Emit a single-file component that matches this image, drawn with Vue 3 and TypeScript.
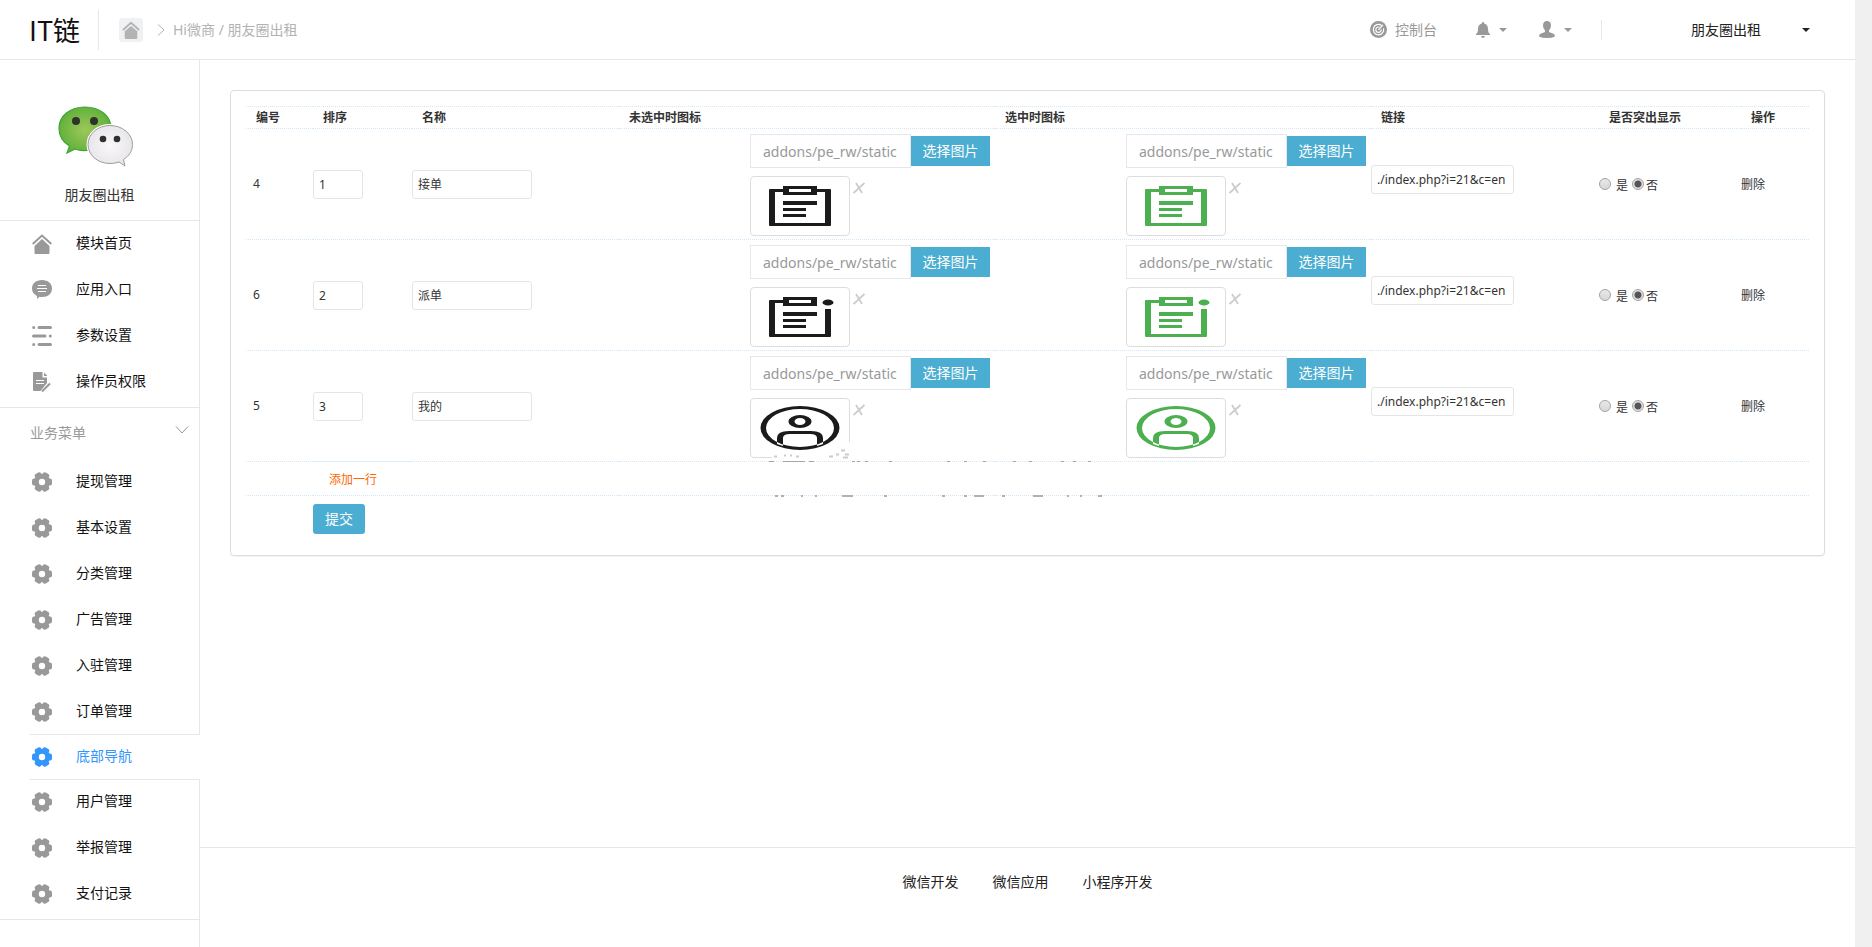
<script setup lang="ts">
import { ref } from 'vue'

interface MenuItem {
  label: string
  icon: 'home' | 'chat' | 'list' | 'doc' | 'gear'
  active?: boolean
}

interface NavRow {
  id: number
  order: string
  name: string
  kind: 'board' | 'task' | 'user'
  image: string
  link: string
  raised: 'yes' | 'no'
}

const topMenu: MenuItem[] = [
  { label: '模块首页', icon: 'home' },
  { label: '应用入口', icon: 'chat' },
  { label: '参数设置', icon: 'list' },
  { label: '操作员权限', icon: 'doc' },
]

const bizMenu: MenuItem[] = [
  { label: '提现管理', icon: 'gear' },
  { label: '基本设置', icon: 'gear' },
  { label: '分类管理', icon: 'gear' },
  { label: '广告管理', icon: 'gear' },
  { label: '入驻管理', icon: 'gear' },
  { label: '订单管理', icon: 'gear' },
  { label: '底部导航', icon: 'gear', active: true },
  { label: '用户管理', icon: 'gear' },
  { label: '举报管理', icon: 'gear' },
  { label: '支付记录', icon: 'gear' },
]

const image = 'addons/pe_rw/static'
const link = './index.php?i=21&c=en'

const rows = ref<NavRow[]>([
  { id: 4, order: '1', name: '接单', kind: 'board', image, link, raised: 'no' },
  { id: 6, order: '2', name: '派单', kind: 'task', image, link, raised: 'no' },
  { id: 5, order: '3', name: '我的', kind: 'user', image, link, raised: 'no' },
])

const lines = 'M33 25h34v4H33z M33 32h23v3H33z M33 38h23v3H33z'
const clip = 'M33 10h34v9H33z M39 13v3h22v-3z'
const shapes: Record<NavRow['kind'], string> = {
  board: `M19 14q0-1 1-1h13v3h-8v31h50V16h-8v-3h13q1 0 1 1v35q0 1-1 1H20q-1 0-1-1z ${clip} ${lines}`,
  task: `M19 14q0-1 1-1h13v3h-8v31h50V22h6v27q0 1-1 1H20q-1 0-1-1z ${clip} ${lines} M72.500 15.500a5.500 3 0 1 0 11 0a5.500 3 0 1 0-11 0z`,
  user:
    'M10.500 30a39.500 22 0 1 0 79 0a39.500 22 0 1 0-79 0z M16 30a34 19 0 1 1 68 0a34 19 0 1 1-68 0z ' +
    'M38.500 23.500a11.500 6.500 0 1 0 23 0a11.500 6.500 0 1 0-23 0z M44.500 23.500a5.500 3.500 0 1 1 11 0a5.500 3.500 0 1 1-11 0z ' +
    'M27 46v-6q0-7 12-7h22q12 0 12 7v6l-6 2v-8q0-4-7-4H40q-7 0-7 4v8z',
}

const variants = [
  { key: 'off', color: '#1b1b1b', title: '未选中时图标' },
  { key: 'on', color: '#4caf50', title: '选中时图标' },
]

const footer = ['微信开发', '微信应用', '小程序开发']

const gearTeeth = [30, 90, 150, 210, 270, 330]
</script>

<template>
  <div class="page">
    <header class="topbar">
      <div class="brand">IT链</div>
      <nav class="crumbs">
        <a href="#" class="home-btn" aria-label="首页">
          <svg width="18" height="18" viewBox="0 0 20 20">
            <path d="M1 10 10 2l9 8" fill="none" stroke="currentColor" stroke-width="2" />
            <path d="M3 11.500 10 5.500l7 6V19q0 1-1 1H4q-1 0-1-1z" fill="currentColor" />
          </svg>
        </a>
        <svg class="sep" width="8" height="12" viewBox="0 0 8 12">
          <path d="M1 .5 7 6l-6 5.500" fill="none" stroke="currentColor" />
        </svg>
        <span>Hi微商 / 朋友圈出租</span>
      </nav>
      <div class="tools">
        <a href="#" class="console">
          <svg width="17" height="17" viewBox="0 0 17 17">
            <circle cx="8.500" cy="8.500" r="8.500" fill="currentColor" />
            <path
              d="M11.500 4.400A5.200 5.200 0 1 0 13.500 7.300M9.500 6.200A2.700 2.700 0 1 0 11.200 8.500M8.500 8.800 13 3.800"
              fill="none"
              stroke="#fff"
              stroke-width="1.200"
            />
          </svg>
          <span>控制台</span>
        </a>
        <button type="button" class="icon-btn bell" aria-label="消息">
          <svg width="14" height="16" viewBox="0 0 14 16">
            <path
              d="M7 0q1.200 0 1.200 1.400Q12 2.500 12 7q0 4 2 5v1H0v-1q2-1 2-5 0-4.500 3.800-5.600Q5.800 0 7 0zM5 14h4q-.5 2-2 2t-2-2z"
              fill="currentColor"
            />
          </svg>
          <i class="caret"></i>
        </button>
        <button type="button" class="icon-btn user" aria-label="用户">
          <svg width="16" height="17" viewBox="0 0 16 17">
            <path
              d="M8 0q4 0 4 4.500Q12 7.500 10 9.500v1.500l4.500 1.700Q16 13.500 16 15.500 13 17 8 17T0 15.500q0-2 1.500-2.800L6 11V9.500Q4 7.500 4 4.500 4 0 8 0z"
              fill="currentColor"
            />
          </svg>
          <i class="caret"></i>
        </button>
        <button type="button" class="account">
          <span>朋友圈出租</span>
          <i class="caret"></i>
        </button>
      </div>
    </header>

    <div class="body">
      <aside class="sidebar">
        <div class="profile">
          <svg class="avatar" width="76" height="66" viewBox="0 0 76 66">
            <defs>
              <radialGradient id="leaf">
                <stop offset="0" stop-color="#9cc85a" />
                <stop offset="1" stop-color="#64b13c" />
              </radialGradient>
              <radialGradient id="pearl">
                <stop offset="0" stop-color="#faf8fa" />
                <stop offset="1" stop-color="#e8e6ea" />
              </radialGradient>
            </defs>
            <path
              d="M27 1C12 1 1 10 1 22.500 1 30 5 36 11.500 40L9 47l8-4q5 2 12 1.500C44 44 53 35 53 22.500 53 10 42 1 27 1z"
              fill="url(#leaf)"
              stroke="#3da537"
              stroke-width="1.200"
            />
            <path
              d="M52 19.500c-12.500 0-22 8.500-22 19s9.500 19 22 19q5 0 9-1.500l6 4-1.500-6.500C71 50 74.500 45 74.500 38.500c0-10.500-10-19-22.500-19z"
              fill="url(#pearl)"
              stroke="#fff"
              stroke-width="3"
            />
            <path
              d="M52 19.500c-12.500 0-22 8.500-22 19s9.500 19 22 19q5 0 9-1.500l6 4-1.500-6.500C71 50 74.500 45 74.500 38.500c0-10.500-10-19-22.500-19z"
              fill="url(#pearl)"
              stroke="#9d9da0"
            />
            <g fill="#2c332c">
              <circle cx="18" cy="15" r="4" />
              <circle cx="36" cy="15" r="4" />
              <circle cx="45" cy="33" r="3.300" />
              <circle cx="59" cy="33" r="3.300" />
            </g>
          </svg>
          <div>朋友圈出租</div>
        </div>

        <nav v-for="(group, g) in [topMenu, bizMenu]" :key="g" class="group">
          <button v-if="g === 1" type="button" class="group-head">
            <span>业务菜单</span>
            <svg width="14" height="8" viewBox="0 0 14 8">
              <path d="M1 .5 7 7l6-6.500" fill="none" stroke="currentColor" />
            </svg>
          </button>
          <a
            v-for="item in group"
            :key="item.label"
            href="#"
            class="item"
            :class="{ active: item.active }"
          >
            <svg width="20" height="20" viewBox="0 0 20 20">
              <template v-if="item.icon === 'home'">
                <path d="M.7 10 10 1.500l9.300 8.500" fill="none" stroke="currentColor" stroke-width="2" />
                <path d="M2.500 12 10 5l7.500 7v7q0 1-1 1h-13q-1 0-1-1z" fill="currentColor" />
              </template>
              <template v-else-if="item.icon === 'chat'">
                <path d="M10 0c6 0 10 3.500 10 8.500S16 17 10 17q-1.500 0-2.500-.2L5 19v-3Q0 13.500 0 8.500C0 3.500 4 0 10 0z" fill="currentColor" />
                <path d="M6 5.500h8M5 8.500h10M6 11.500h8" stroke="#fff" />
              </template>
              <template v-else-if="item.icon === 'list'">
                <g stroke="currentColor" stroke-width="3" stroke-linecap="round">
                  <path d="M7 1.500h11.500M1.500 10h11.500M7 18.500h11.500M1.700 1.500h.01M18.300 10h.01M1.700 18.500h.01" />
                </g>
              </template>
              <template v-else-if="item.icon === 'doc'">
                <path d="M2 0h8.500v5.500h4.500V11l-6.500 8H2q-1 0-1-1V1q0-1 1-1zM12 .5l3.500 3.500H12z" fill="currentColor" />
                <path d="M4 8.500h8M4 11.500h8" stroke="#fff" />
                <path d="M18 11.500l-8 8" stroke="currentColor" stroke-width="2" />
              </template>
              <g v-else fill="currentColor">
                <circle cx="10" cy="10" r="5.700" fill="none" stroke="currentColor" stroke-width="5" />
                <rect
                  v-for="deg in gearTeeth"
                  :key="deg"
                  x="6.500"
                  y="0"
                  width="7"
                  height="5"
                  rx="2"
                  :transform="`rotate(${deg} 10 10)`"
                />
              </g>
            </svg>
            <span>{{ item.label }}</span>
          </a>
        </nav>
      </aside>

      <div class="main">
        <form class="panel" @submit.prevent>
          <table>
            <colgroup>
              <col class="c-id" />
              <col class="c-order" />
              <col class="c-name" />
              <col class="c-img" />
              <col class="c-img" />
              <col class="c-link" />
              <col class="c-raised" />
              <col class="c-op" />
            </colgroup>
            <thead>
              <tr>
                <th>编号</th>
                <th>排序</th>
                <th>名称</th>
                <th>未选中时图标</th>
                <th>选中时图标</th>
                <th>链接</th>
                <th>是否突出显示</th>
                <th>操作</th>
              </tr>
            </thead>
            <tbody>
              <tr v-for="row in rows" :key="row.id" class="data">
                <td class="id">{{ row.id }}</td>
                <td><input v-model="row.order" class="field order" type="text" aria-label="排序" /></td>
                <td><input v-model="row.name" class="field name" type="text" aria-label="名称" /></td>
                <td v-for="v in variants" :key="v.key">
                  <div class="picker">
                    <div class="pick-line">
                      <input v-model="row.image" class="path" type="text" :aria-label="v.title" />
                      <button type="button" class="pick">选择图片</button>
                    </div>
                    <div class="preview">
                      <svg class="thumb" viewBox="1 1 98 58">
                        <path :d="shapes[row.kind]" :fill="v.color" fill-rule="evenodd" />
                      </svg>
                      <button type="button" class="remove" aria-label="删除图片">
                        <svg width="12" height="12" viewBox="0 0 12 12">
                          <path d="M3 1 9 11M11.500 1 .5 11" stroke="currentColor" stroke-width="1.800" />
                        </svg>
                      </button>
                    </div>
                  </div>
                </td>
                <td><input v-model="row.link" class="field link" type="text" aria-label="链接" /></td>
                <td>
                  <div class="radios">
                    <input :id="`y${row.id}`" v-model="row.raised" type="radio" value="yes" :name="`r${row.id}`" />
                    <label class="yes" :for="`y${row.id}`">是</label>
                    <input :id="`n${row.id}`" v-model="row.raised" type="radio" value="no" :name="`r${row.id}`" />
                    <label :for="`n${row.id}`">否</label>
                  </div>
                </td>
                <td class="op"><a href="#">删除</a></td>
              </tr>
              <tr class="add">
                <td></td>
                <td class="add-cell"><a href="#">添加一行</a></td>
                <td colspan="6"></td>
              </tr>
              <tr class="send">
                <td></td>
                <td colspan="7"><button type="submit">提交</button></td>
              </tr>
            </tbody>
          </table>
          <svg class="specks" width="350" height="60" viewBox="0 0 350 60" aria-hidden="true">
            <path d="M92 1h4v18H17v-3h30v-3h10v3h35z" fill="#fff" />
            <path
              d="M19 15.500h3M29 14.500h2M35 14.500h2M41 15.500h3M74 15.500h4M81 13.500h3M86 9.500h4M90 13.500h4M88 16.500h5"
              stroke="#ccc"
              stroke-width="2"
            />
            <path
              d="M14 20.500h5M28 20.500h22M54 20.500h5M97 20.500h3M102 20.500h3M110 20.500h3M134 20.500h3M192 20.500h3M209 20.500h3M228 20.500h3M258 20.500h3M274 20.500h3M306 20.500h3M318 20.500h3M333 20.500h3"
              stroke="#a5a6ab"
            />
            <path
              d="M20 55h3M26 55h3M46 55h2M60 55h2M87 55h11M129 55h3M187 55h3M209 55h3M219 55h10M247 55h3M278 55h10M312 55h2M325 55h2M343 55h4"
              stroke="#b0b1b5"
              stroke-width="2"
            />
          </svg>
        </form>

        <footer class="footer">
          <a v-for="name in footer" :key="name" href="#">{{ name }}</a>
        </footer>
      </div>
    </div>
  </div>
</template>

<style>
body {
  background: #f0f0f0;
}
</style>

<style scoped>
.page,
.page * {
  box-sizing: border-box;
}
.page {
  display: flex;
  flex-direction: column;
  min-height: 100vh;
  margin-right: 17px;
  background: #fff;
  color: #333;
  font: 14px/20px 'Noto Sans', 'Noto Sans CJK SC', sans-serif;
}
a {
  color: inherit;
  text-decoration: none;
}
button,
input {
  font: inherit;
  color: inherit;
  margin: 0;
}
button {
  border: 0;
  padding: 0;
  background: none;
  cursor: pointer;
}
svg {
  display: block;
  flex: none;
}

.topbar {
  display: flex;
  align-items: center;
  height: 60px;
  border-bottom: 1px solid #e7e7eb;
}
.brand {
  width: 99px;
  padding-left: 29px;
  border-right: 1px solid #e7e7eb;
  color: #111;
  font: 27px/40px 'Noto Sans CJK SC', sans-serif;
  white-space: nowrap;
}
.crumbs {
  display: flex;
  align-items: center;
  margin-left: 20px;
  color: #b3b3b3;
}
.home-btn {
  display: flex;
  align-items: center;
  justify-content: center;
  width: 24px;
  height: 24px;
  border-radius: 3px;
  background: #f0f1f3;
}
.sep {
  margin: 0 8px 0 14px;
}
.tools {
  display: flex;
  align-items: center;
  margin-left: auto;
  color: #999;
}
.console {
  display: flex;
  align-items: center;
  gap: 8px;
  margin-right: 39px;
}
.icon-btn {
  display: flex;
  align-items: center;
  gap: 9px;
}
.bell {
  margin-right: 32px;
}
.caret {
  border: 4px solid transparent;
  border-top-color: currentColor;
  border-bottom: 0;
}
.account {
  display: flex;
  align-items: center;
  gap: 41px;
  margin-left: 29px;
  padding: 0 45px 0 89px;
  border-left: 1px solid #e7e7eb;
  color: #222;
}

.body {
  flex: 1;
  display: flex;
}
.sidebar {
  flex: none;
  width: 200px;
  border-right: 1px solid #e7e7eb;
  color: #111;
}
.profile {
  display: flex;
  flex-direction: column;
  align-items: center;
  gap: 13px;
  padding: 46px 0 15px;
  border-bottom: 1px solid #e7e7eb;
  color: #333;
}
.avatar {
  margin-right: 8px;
}
.group {
  padding-bottom: 2px;
  border-bottom: 1px solid #e7e7eb;
}
.group-head {
  display: flex;
  align-items: center;
  justify-content: space-between;
  width: 100%;
  height: 51px;
  padding: 0 10px 0 30px;
  color: #999;
}
.group-head svg {
  margin-bottom: 8px;
}
.group-head span,
.item span {
  padding-bottom: 2px;
}
.item {
  display: flex;
  align-items: center;
  gap: 24px;
  height: 46px;
  padding-left: 32px;
}
.item svg {
  color: #999;
}
.item.active {
  position: relative;
  margin: -1px -1px -1px 30px;
  padding-left: 2px;
  border-top: 1px solid #e7e7eb;
  border-bottom: 1px solid #e7e7eb;
  background: #fff;
}
.item.active,
.item.active svg {
  color: #3296fa;
}

.main {
  flex: 1;
  min-width: 0;
  display: flex;
  flex-direction: column;
}
.panel {
  position: relative;
  margin: 30px;
  padding: 15px 15px 13px;
  border: 1px solid #ddd;
  border-radius: 4px;
  box-shadow: 0 1px 1px rgba(0, 0, 0, 0.05);
}
.specks {
  position: absolute;
  left: 524px;
  top: 350px;
  pointer-events: none;
}
table {
  width: 100%;
  table-layout: fixed;
  border-collapse: collapse;
  font-size: 12px;
}
.c-id {
  width: 67px;
}
.c-order {
  width: 99px;
}
.c-name {
  width: 207px;
}
.c-img {
  width: 376px;
}
.c-link {
  width: 228px;
}
.c-raised {
  width: 142px;
}
.c-op {
  width: 68px;
}
th {
  height: 22px;
  padding: 0 10px;
  border-top: 1px dotted #d0e8f8;
  text-align: left;
  font-weight: 600;
  white-space: nowrap;
}
td {
  padding: 0;
  border-top: 1px dotted #d0e8f8;
  vertical-align: middle;
}
.data td {
  height: 111px;
}
.data .id {
  padding-left: 7px;
}
.data .op {
  padding-top: 2px;
}
.field {
  display: block;
  height: 29px;
  padding: 0 5px;
  border: 1px solid #e5e5e5;
  border-radius: 3px;
  background: #fff;
}
.order {
  width: 50px;
}
.name {
  width: 120px;
}
.link {
  width: 143px;
  margin-bottom: 9px;
}
.picker {
  width: 240px;
  margin: 2px 5px 0 auto;
  font-size: 14px;
}
.pick-line {
  display: flex;
  align-items: center;
}
.path {
  width: 161px;
  height: 34px;
  padding: 0 12px;
  border: 1px solid #e7e7eb;
  background: #fff;
  color: #999;
}
.pick {
  flex: 1;
  height: 30px;
  background: #4badd1;
  color: #fff;
}
.preview {
  display: flex;
  align-items: flex-start;
  margin-top: 8px;
}
.thumb {
  width: 100px;
  height: 60px;
  border: 1px solid #ddd;
  border-radius: 4px;
}
.remove {
  margin: 6px 0 0 3px;
  color: #ccc;
}
.radios {
  display: flex;
  align-items: center;
}
.radios input {
  appearance: none;
  width: 12px;
  height: 12px;
  border: 1px solid #a5a5a5;
  border-radius: 50%;
  background: linear-gradient(#e8e8e8, #d8d8d8);
}
.radios input:checked {
  background: radial-gradient(circle, #555 3px, #e0e0e0 4px);
}
.radios label {
  margin: 4px 0 0 2px;
}
.radios .yes {
  margin: 4px 4px 0 5px;
}
.add td {
  height: 34px;
  padding-top: 2px;
  border-bottom: 1px dotted #d0e8f8;
}
.add .add-cell {
  border-top: 1px solid #dcebf8;
}
.add a {
  margin-left: 16px;
  color: #f60;
}
.send td {
  height: 46px;
}
.send button {
  display: block;
  width: 52px;
  height: 30px;
  border-radius: 3px;
  background: #4badd1;
  color: #fff;
  font-size: 14px;
}

.footer {
  display: flex;
  justify-content: center;
  gap: 34px;
  height: 100px;
  margin-top: auto;
  padding-top: 24px;
  border-top: 1px solid #e7e7eb;
  color: #222;
}
</style>
